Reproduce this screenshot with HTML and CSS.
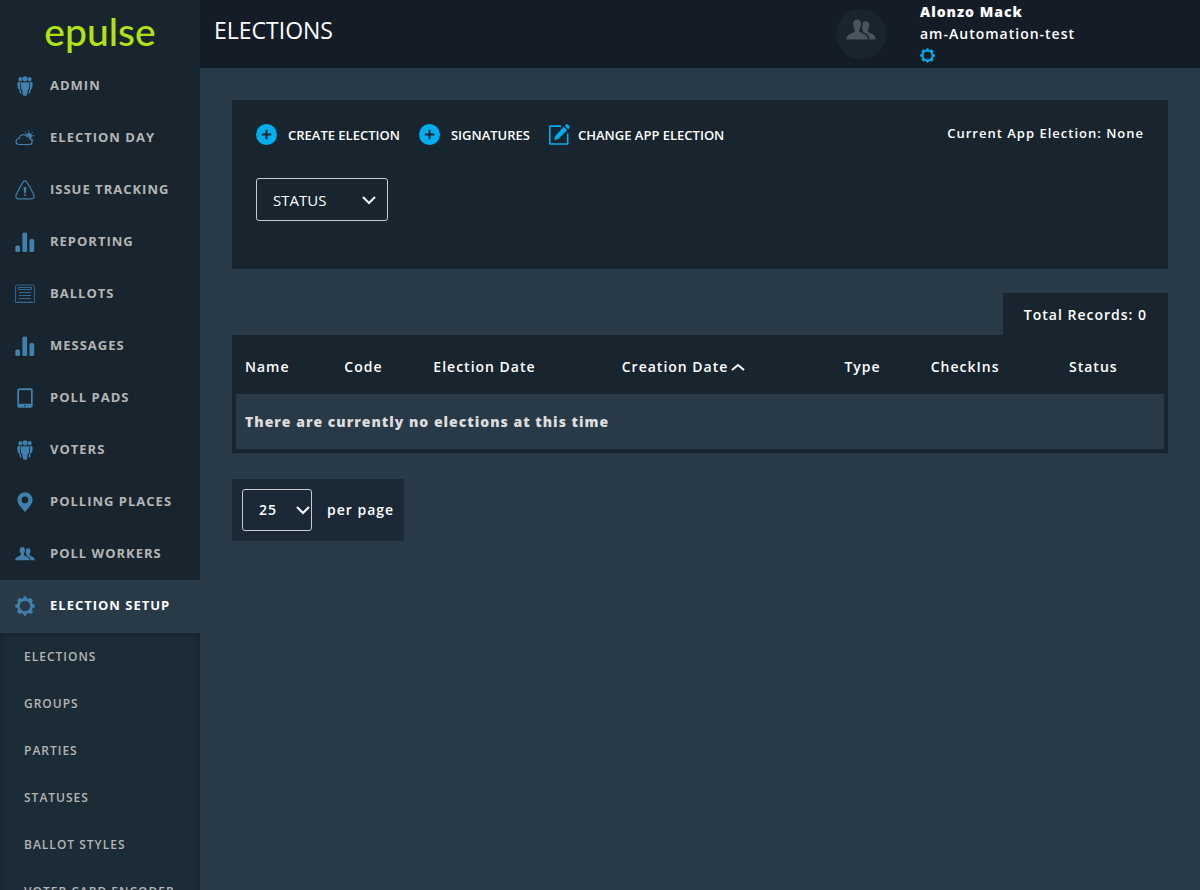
FILE: index.html
```html
<!DOCTYPE html>
<html lang="en">
<head>
<meta charset="utf-8">
<title>Elections</title>
<link rel="stylesheet" href="styles.css">
</head>
<body>
<svg class="sprite" aria-hidden="true">
  <symbol id="group" viewBox="0 0 20 20">
    <circle cx="10" cy="2.8" r="2.6"/><ellipse cx="5.3" cy="3.2" rx="1.9" ry="2.2"/><ellipse cx="14.7" cy="3.2" rx="1.9" ry="2.2"/>
    <path d="M6.400 6.200h7.200l.5.8v5.400l-1.300 1.800-.8 5-2 .8-2-.8-.8-5-1.300-1.800V7z"/>
    <path d="M5.400 6H3.800C2.600 6 2.300 7 2.300 8.200l.6 4.300 1.400 1.100.5 3.700 1.700.5-.6-3.500-.9-1.500z"/>
    <path d="M14.600 6h1.600c1.200 0 1.500 1 1.500 2.200l-.6 4.300-1.400 1.100-.5 3.700-1.700.5.6-3.500.9-1.500z"/>
  </symbol>
  <symbol id="weather" viewBox="0 0 20 20">
    <g fill="none" stroke="currentColor" stroke-linecap="round">
      <path d="M4 16.500h10.500a2.700 2.700 0 0 0 .7-5.300A3 3 0 0 0 12.200 8.700 4.500 4.500 0 0 0 4 10.500a3 3 0 0 0 0 6z" stroke-width="1.200"/>
      <path d="M13.800 2.700v1.400M10 4.300l.9 1M17.600 4.200l-.9.900M19 7.800h-1.300M17.500 11.600l-.8-.8" stroke-width="1"/>
    </g>
    <path d="M11 7.200a3 3 0 1 1 5.200 2.700l-.8.400c-.3-1.300-1.300-2.300-2.700-2.500z"/>
  </symbol>
  <symbol id="warning" viewBox="0 0 20 20">
    <path d="M8.300 1.900a2 2 0 0 1 3.400 0c2.300 3.400 5 8.300 7 12.700.9 2.400.2 4.200-2 4.200H3.300c-2.200 0-2.900-1.800-2-4.200 2-4.400 4.700-9.300 7-12.700z" fill="none" stroke="currentColor" stroke-width="1.200"/>
    <path d="M8.500 7h3l-.7 6.200H9.200z"/><rect x="9" y="14.200" width="2" height="1.800" rx=".8"/>
  </symbol>
  <symbol id="bars" viewBox="0 0 20 20">
    <rect x=".3" y="13.500" width="4.700" height="6.500" rx="1.500"/><rect x="7.400" y=".5" width="4.700" height="19.500" rx="1.500"/><rect x="14.500" y="7" width="4.700" height="13" rx="1.500"/>
  </symbol>
  <symbol id="ballot" viewBox="0 0 20 20">
    <g fill="none" stroke="currentColor">
      <path d="M.6 18.500V2.500a1.400 1.400 0 0 1 1.400-1.400h16a1.400 1.400 0 0 1 1.400 1.400v16z" stroke-width="1"/>
      <path d="M3.500 3.500h13v2h-13zM4 8.500h12M4 11.500h12M4 14.500h12" stroke-width="1"/>
      <path d="M3.500 17.300h13" stroke-width="1" stroke-dasharray="1 2"/>
    </g>
  </symbol>
  <symbol id="tablet" viewBox="0 0 20 20">
    <path fill-rule="evenodd" d="M4 .3h12a1.700 1.700 0 0 1 1.700 1.700v16a1.700 1.700 0 0 1-1.700 1.700H4A1.700 1.700 0 0 1 2.300 18V2A1.700 1.700 0 0 1 4 .3zM4 2.200v13.600h12V2.200zM10 17a.8.8 0 1 0 0 1.600.8.8 0 0 0 0-1.600z"/>
  </symbol>
  <symbol id="pin" viewBox="0 0 20 20">
    <path fill-rule="evenodd" d="M10 .2a7.600 7.600 0 0 1 7.600 7.700c0 4-4 8-7.600 12-3.600-4-7.600-8-7.600-12A7.600 7.600 0 0 1 10 .2zm0 4.400a3.300 3.300 0 1 0 0 6.600 3.300 3.300 0 0 0 0-6.600z"/>
  </symbol>
  <symbol id="people" viewBox="0 0 30 30">
    <path d="M11 4.500c2.800 0 4.200 2 4 5-.1 2-.8 3.600-1.600 4.600v2.300c1 2 8.600 2 8.600 8.100H.3c0-6.100 7.400-6.100 8.400-8.100v-2.300C7.900 13 7.200 11.500 7.100 9.500c-.2-3 1.100-5 3.900-5z"/>
    <path d="M16.500 7.200c.9-.7 2-1 3.200-1 2.500 0 3.700 1.700 3.500 4.300-.1 1.700-.7 3-1.300 3.900v2.200c1 2.100 7.800 2 7.800 7.900h-6.300c0-4-2.400-5.600-6.400-7.400v-1.800c-.9-1-.9-1.200-1.100-2 .8-2 1.100-4 .6-6.100z"/>
  </symbol>
  <symbol id="gear" viewBox="0 0 20 20">
    <path fill-rule="evenodd" d="M8.200 2.200 9 .2h2l.8 2 1.700.7 2-1.100 2.500 2.500-1.100 2 .7 1.700 2.200.8v2.400l-2.200.8-.7 1.700 1.100 2-2.500 2.500-2-1.100-1.700.7-.8 2H9l-.8-2-1.700-.7-2 1.100L2 15.700l1.100-2-.7-1.700-2.200-.8V8.800L2.400 8l.7-1.700L2 4.300l2.500-2.500 2 1.100zM10 4.700a5.300 5.300 0 1 0 0 10.600 5.300 5.300 0 0 0 0-10.600z"/>
  </symbol>
  <symbol id="plus" viewBox="0 0 20 20">
    <path fill-rule="evenodd" d="M10 0a10 10 0 1 1 0 20 10 10 0 0 1 0-20zM9 5.500V9H5.500v2H9v3.500h2V11h3.500V9H11V5.500z"/>
  </symbol>
  <symbol id="edit" viewBox="0 0 20 20">
    <path d="M11.500 2H1.300a.5.500 0 0 0-.5.500v16a.5.500 0 0 0 .5.500h16a.5.500 0 0 0 .5-.5V9" fill="none" stroke="currentColor" stroke-width="1.500"/>
    <path d="M14 2.600 17.300 6 8.800 14.200 5 15.500l1-4z"/><path d="m15 1.700 1.200-1.200c1.400-1 4.400 1.700 3.300 3.300L18.300 5z"/>
  </symbol>
</svg>
<div class="app">
  <aside class="sidebar">
    <a class="logo" href="#">epulse</a>
    <nav>
      <ul class="menu">
        <li><a href="#"><svg><use href="#group"/></svg>ADMIN</a></li>
        <li><a href="#"><svg><use href="#weather"/></svg>ELECTION DAY</a></li>
        <li><a href="#"><svg><use href="#warning"/></svg>ISSUE TRACKING</a></li>
        <li><a href="#"><svg><use href="#bars"/></svg>REPORTING</a></li>
        <li><a href="#"><svg class="thin"><use href="#ballot"/></svg>BALLOTS</a></li>
        <li><a href="#"><svg><use href="#bars"/></svg>MESSAGES</a></li>
        <li><a href="#"><svg><use href="#tablet"/></svg>POLL PADS</a></li>
        <li><a href="#"><svg><use href="#group"/></svg>VOTERS</a></li>
        <li><a href="#"><svg><use href="#pin"/></svg>POLLING PLACES</a></li>
        <li><a href="#"><svg><use href="#people"/></svg>POLL WORKERS</a></li>
        <li><a class="active" href="#"><svg><use href="#gear"/></svg>ELECTION SETUP</a></li>
      </ul>
      <ul class="submenu">
        <li><a href="#">ELECTIONS</a></li>
        <li><a href="#">GROUPS</a></li>
        <li><a href="#">PARTIES</a></li>
        <li><a href="#">STATUSES</a></li>
        <li><a href="#">BALLOT STYLES</a></li>
        <li><a href="#">VOTER CARD ENCODER</a></li>
      </ul>
    </nav>
  </aside>
  <div class="page">
    <header class="topbar">
      <h1>ELECTIONS</h1>
      <div class="avatar"><svg><use href="#people"/></svg></div>
      <div class="user">
        <strong>Alonzo Mack</strong>
        <span>am-Automation-test</span>
        <a href="#" aria-label="Settings"><svg><use href="#gear"/></svg></a>
      </div>
    </header>
    <main>
      <section class="panel">
        <div class="actions">
          <button type="button"><svg><use href="#plus"/></svg>CREATE ELECTION</button>
          <button type="button"><svg><use href="#plus"/></svg>SIGNATURES</button>
          <button class="change" type="button"><svg><use href="#edit"/></svg>CHANGE APP ELECTION</button>
          <p>Current App Election: None</p>
        </div>
        <div class="select status">
          <select aria-label="Status"><option>STATUS</option></select>
          <svg class="chevron" viewBox="0 0 14 10"><path d="m1 2 6 6 6-6"/></svg>
        </div>
      </section>
      <section class="records">
        <p class="total">Total Records: 0</p>
        <table>
          <thead>
            <tr>
              <th class="name">Name</th>
              <th class="code">Code</th>
              <th class="election">Election Date</th>
              <th class="creation">Creation Date<svg class="chevron" viewBox="0 0 14 10"><path d="m1 8 6-5 6 5"/></svg></th>
              <th class="type">Type</th>
              <th class="checkins">CheckIns</th>
              <th class="state">Status</th>
            </tr>
          </thead>
          <tbody>
            <tr><td colspan="7">There are currently no elections at this time</td></tr>
          </tbody>
        </table>
      </section>
      <div class="pager">
        <div class="select count">
          <select id="count"><option>25</option></select>
          <svg class="chevron" viewBox="0 0 14 10"><path d="m1 2 6 6 6-6"/></svg>
        </div>
        <label for="count">per page</label>
      </div>
    </main>
  </div>
</div>
</body>
</html>
```
FILE: styles.css
```css
* { box-sizing: border-box; }
body {
  margin: 0;
  background: #283a48;
  color: #fff;
  font: 600 14px/22px "Open Sans", "Noto Sans", sans-serif;
  letter-spacing: 1px;
}
a { color: inherit; text-decoration: none; }
ul { list-style: none; margin: 0; padding: 0; }
p { margin: 0; }
svg { fill: currentColor; flex: none; }
.sprite { display: none; }
.app { display: flex; height: 100vh; overflow: hidden; }

.sidebar { flex: none; width: 200px; background: #18252e; overflow: hidden; }
.logo {
  display: block;
  height: 60px;
  color: #b1e312;
  font: 500 39px/62px Lato, sans-serif;
  letter-spacing: 0;
  text-align: center;
}
.menu a {
  display: flex;
  align-items: center;
  gap: 15px;
  height: 52px;
  padding: 0 15px 2px;
  color: #b5b5b5;
  font-size: 13px;
  font-weight: 700;
  white-space: nowrap;
}
.menu svg { width: 20px; height: 20px; margin-top: 2px; color: #3f80ac; }
.menu svg.thin { color: #336a8f; }
.menu .active { height: 53px; padding-bottom: 3px; background: #283a48; color: #fff; }
.submenu { background: #1c2c37; box-shadow: inset 0 0 10px #14202a; }
.submenu a {
  display: flex;
  align-items: center;
  height: 47px;
  padding: 0 24px;
  color: #b5b5b5;
  font-size: 12px;
  white-space: nowrap;
}

.page { flex: 1; min-width: 0; overflow: auto; }
.topbar { display: flex; height: 68px; background: #141d27; }
.topbar h1 {
  flex: 1;
  margin: 0;
  padding-left: 14px;
  font-size: 23px;
  font-weight: 400;
  line-height: 60px;
  letter-spacing: 0;
}
.avatar {
  display: flex;
  justify-content: center;
  width: 50px;
  height: 50px;
  margin-top: 9px;
  padding-top: 6px;
  border-radius: 50%;
  background: #18252e;
  color: #4b545e;
}
.avatar svg { width: 30px; height: 30px; }
.user { display: flex; flex-direction: column; width: 314px; padding: 1px 0 0 34px; }
.user strong { font-weight: 800; }
.user a { display: flex; align-items: center; height: 21px; color: #00aeef; }
.user svg { width: 15px; height: 15px; }

main { padding: 32px; }
.panel { padding: 24px; min-height: 169px; background: #18252e; }
.actions { display: flex; align-items: center; gap: 19px; height: 21px; }
.actions button {
  display: flex;
  align-items: center;
  gap: 11px;
  padding: 0;
  border: 0;
  background: none;
  color: #fff;
  font: inherit;
  font-size: 13px;
  letter-spacing: 0;
}
.actions .change { gap: 8px; }
.actions svg { width: 21px; height: 21px; color: #00aeef; }
.actions p { margin-left: auto; padding-bottom: 3px; font-size: 13px; }
.select { position: relative; }
.select select {
  appearance: none;
  width: 100%;
  height: 43px;
  padding: 0 16px;
  border: 1px solid #ccc;
  border-radius: 3px;
  background: none;
  color: #fff;
  font: inherit;
  letter-spacing: inherit;
}
.chevron { width: 14px; height: 10px; fill: none; stroke: #fff; stroke-width: 2; }
th .chevron { margin-left: 3px; stroke-width: 2; }
.select .chevron { position: absolute; right: 12px; top: 17px; pointer-events: none; }
.status { width: 132px; margin-top: 33px; }
.status select { font-size: 15px; font-weight: 400; letter-spacing: 0; }

.records { margin-top: 24px; }
.total {
  width: fit-content;
  margin-left: auto;
  padding: 11px 21px 9px;
  background: #18252e;
}
table {
  width: 100%;
  table-layout: fixed;
  border-collapse: separate;
  border-spacing: 0;
  border: 4px solid #18252e;
}
th { height: 55px; padding: 0 9px; background: #18252e; font-weight: 600; text-align: left; white-space: nowrap; }
td { height: 55px; padding: 0 9px; color: #ddd; font-weight: 800; }
.name { width: 10.7%; }
.code { width: 9.6%; }
.election { width: 20.3%; }
.creation { width: 24%; }
.type { width: 9.3%; }
.checkins { width: 14.9%; }

.pager {
  display: flex;
  align-items: center;
  gap: 15px;
  width: fit-content;
  margin-top: 26px;
  padding: 10px;
  background: #1b2835;
}
.count { width: 70px; }
.count select { height: 42px; }
.count .chevron { right: 2px; top: 16px; }
```
